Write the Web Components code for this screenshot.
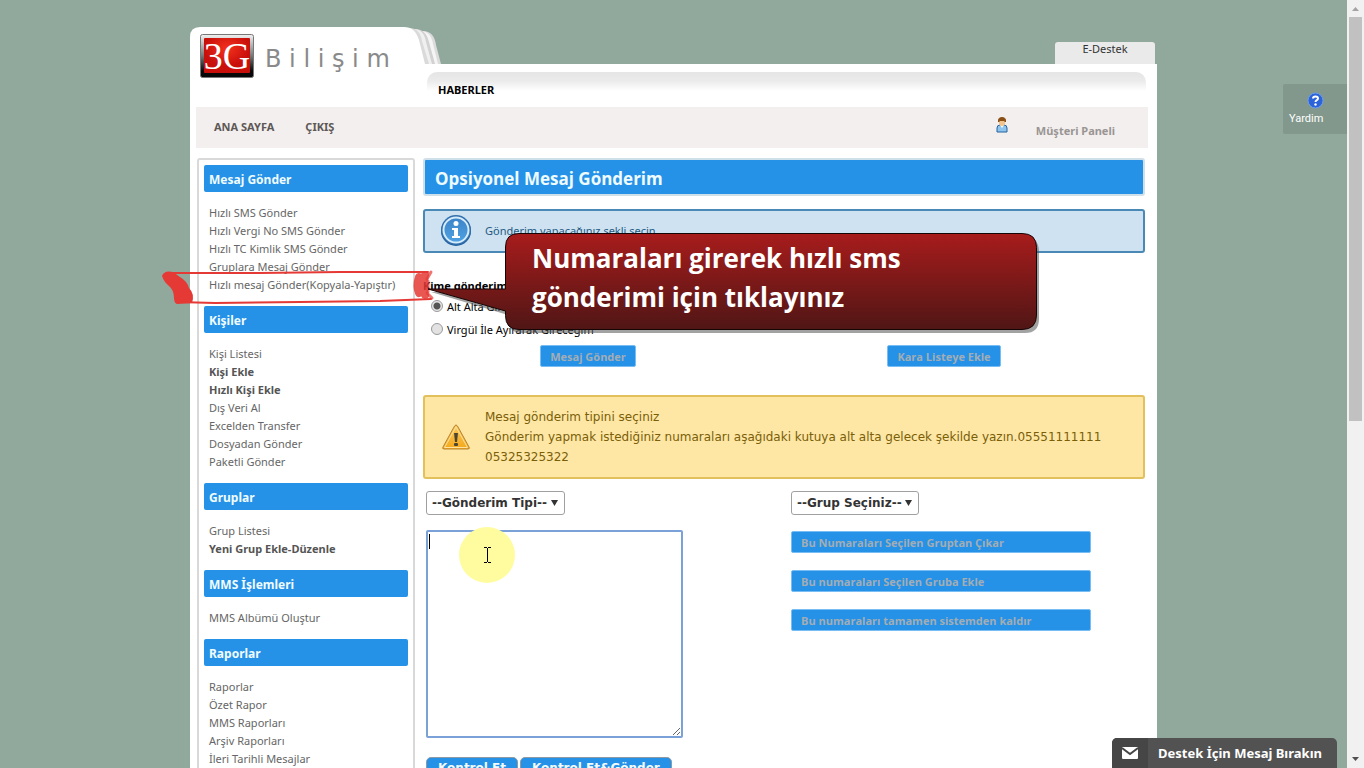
<!DOCTYPE html>
<html lang="tr">
<head>
<meta charset="utf-8">
<title>3G Bilişim</title>
<style>
  html, body {
    margin: 0;
    height: 100%;
    overflow: hidden;
    background: #91a89c;
    font: 12px/18px "Noto Sans", "Open Sans", sans-serif;
  }
</style>
</head>
<body>
<sms-app>
  <site-header slot="header"></site-header>
  <site-nav slot="nav"></site-nav>
  <side-menu slot="side">
    <menu-group heading="Mesaj Gönder">
      <a href="#">Hızlı SMS Gönder</a>
      <a href="#">Hızlı Vergi No SMS Gönder</a>
      <a href="#">Hızlı TC Kimlik SMS Gönder</a>
      <a href="#">Gruplara Mesaj Gönder</a>
      <a href="#">Hızlı mesaj Gönder(Kopyala-Yapıştır)</a>
    </menu-group>
    <menu-group heading="Kişiler">
      <a href="#">Kişi Listesi</a>
      <a href="#" class="strong">Kişi Ekle</a>
      <a href="#" class="strong">Hızlı Kişi Ekle</a>
      <a href="#">Dış Veri Al</a>
      <a href="#">Excelden Transfer</a>
      <a href="#">Dosyadan Gönder</a>
      <a href="#">Paketli Gönder</a>
    </menu-group>
    <menu-group heading="Gruplar">
      <a href="#">Grup Listesi</a>
      <a href="#" class="strong">Yeni Grup Ekle-Düzenle</a>
    </menu-group>
    <menu-group heading="MMS İşlemleri">
      <a href="#">MMS Albümü Oluştur</a>
    </menu-group>
    <menu-group heading="Raporlar">
      <a href="#">Raporlar</a>
      <a href="#">Özet Rapor</a>
      <a href="#">MMS Raporları</a>
      <a href="#">Arşiv Raporları</a>
      <a href="#">İleri Tarihli Mesajlar</a>
    </menu-group>
  </side-menu>
  <message-form slot="main"></message-form>
</sms-app>
<call-out></call-out>
<help-tab></help-tab>
<support-bar></support-bar>

<script>
class SmsApp extends HTMLElement {
  constructor() {
    super();
    this._root = this.attachShadow({ mode: 'open' });
  }

  connectedCallback() {
    this._root.innerHTML = `
      <style>
        :host {
          display: grid;
          grid-template-columns: 1fr 17px;
          height: 100vh;
        }

        .view {
          overflow: hidden;
        }

        .page {
          max-width: 967px;
          margin: 27px auto 0;
        }

        .sheet {
          background: #fff;
          padding: 0 9px 0 6px;
        }

        .columns {
          display: grid;
          grid-template-columns: 218px 1fr;
          gap: 8px;
          padding: 10px 3px 0 1px;
        }
      </style>
      <div class="view">
        <div class="page">
          <slot name="header"></slot>
          <div class="sheet">
            <slot name="nav"></slot>
            <div class="columns">
              <slot name="side"></slot>
              <slot name="main"></slot>
            </div>
          </div>
        </div>
      </div>
      <scroll-track></scroll-track>
    `;
  }
}

class ScrollTrack extends HTMLElement {
  constructor() {
    super();
    this._root = this.attachShadow({ mode: 'open' });
  }

  connectedCallback() {
    this._root.innerHTML = `
      <style>
        :host {
          display: grid;
          grid-template-rows: 17px 1fr 17px;
          justify-items: center;
          background: #f1f1f1;
        }

        .thumb {
          width: 13px;
          height: 55%;
          background: #c1c1c1;
        }

        svg {
          display: block;
        }
      </style>
      <svg width="17" height="17"><path d="M5 11h7l-3.500-4z" fill="#a3a3a3"/></svg>
      <div class="thumb"></div>
      <svg width="17" height="17"><path d="M5 6h7l-3.500 4z" fill="#505050"/></svg>
    `;
  }
}

class SiteHeader extends HTMLElement {
  constructor() {
    super();
    this._root = this.attachShadow({ mode: 'open' });
  }

  connectedCallback() {
    this._root.innerHTML = `
      <style>
        :host {
          display: grid;
          grid-template-columns: 237px 1fr;
          grid-template-rows: 37px 43px;
          background: linear-gradient(#fff, #fff) 0 37px no-repeat;
        }

        .brand {
          grid-row: 1 / 3;
          display: flex;
          align-items: flex-start;
          gap: 11px;
          padding: 7px 0 0 10px;
          color: #8a8a8a;
          font: 24px/50px "DejaVu Sans", sans-serif;
          white-space: pre;
          position: relative;
        }

        .brand svg {
          flex: none;
        }

        .brand .folder {
          position: absolute;
          left: 0;
          top: 0;
        }

        .brand .mark,
        .brand span {
          position: relative;
        }

        .tabs {
          display: flex;
          justify-content: flex-end;
          align-items: flex-end;
          padding-right: 2px;
        }

        .tabs a {
          width: 100px;
          height: 22px;
          line-height: 14px;
          border-radius: 3px 3px 0 0;
          background: #eaeaea;
          color: #333;
          font-size: 11px;
          text-align: center;
          text-decoration: none;
        }

        .news {
          margin: 8px 11px 0 0;
          padding: 9px 11px 0;
          border-radius: 10px 10px 0 0;
          background: linear-gradient(#e5e5e5, #ebebeb 9px, #fff 19px);
          color: #000;
          font-size: 11px;
          font-weight: bold;
        }
      </style>
      <div class="brand">
        <svg class="folder" width="254" height="37">
          <path d="M215 4h18q11 0 13 14l5 19h-30z" fill="#dcdcdc"/>
          <path d="M215 4h15q11 0 13 13l5 20h-30z" fill="#f5f5f5"/>
          <path d="M215 2h10q11 0 14 13l6 22h-30z" fill="#d2d2d2"/>
          <path d="M215 2h8q11 0 13 13l6 22h-30z" fill="#f0f0f0"/>
          <path d="M215 1h4q11 0 13 13l7 23h-30z" fill="#dadada"/>
          <path d="M0 37V10Q0 0 10 0h204q11 0 15 13l6 24z" fill="#fff"/>
        </svg>
        <svg class="mark" width="54" height="44" viewBox="0 0 54 44">
          <defs>
            <linearGradient id="frame" x2="0" y2="1">
              <stop offset="0" stop-color="#f2f2f2"/>
              <stop offset=".5" stop-color="#777"/>
              <stop offset=".85" stop-color="#080808"/>
            </linearGradient>
            <radialGradient id="red" cy=".3">
              <stop offset="0" stop-color="#f4301e"/>
              <stop offset="1" stop-color="#c80f0a"/>
            </radialGradient>
          </defs>
          <rect x=".5" y=".5" width="53" height="43" rx="2" fill="url(#frame)" stroke="#777"/>
          <rect x="4" y="4" width="46" height="35" rx="1" fill="url(#red)"/>
          <text x="27" y="35" text-anchor="middle" fill="#fff" font-family="Liberation Serif, serif" font-size="38">3G</text>
        </svg>
        <span>B i l i ş i m</span>
      </div>
      <div class="tabs"><a href="#">E-Destek</a></div>
      <div class="news">HABERLER</div>
    `;
  }
}

class SiteNav extends HTMLElement {
  constructor() {
    super();
    this._root = this.attachShadow({ mode: 'open' });
  }

  connectedCallback() {
    this._root.innerHTML = `
      <style>
        :host {
          display: block;
        }

        nav {
          display: flex;
          gap: 31px;
          height: 41px;
          padding: 0 33px 0 18px;
          background: #f3efee;
          font-size: 11px;
          font-weight: bold;
          line-height: 40px;
        }

        a {
          color: #5d5856;
          text-decoration: none;
        }

        .user {
          display: flex;
          gap: 28px;
          margin-left: auto;
          color: #999593;
          line-height: 48px;
        }

        svg {
          margin-top: 10px;
        }
      </style>
      <nav>
        <a href="#">ANA SAYFA</a>
        <a href="#">ÇIKIŞ</a>
        <span class="user">
          <svg width="12" height="16" viewBox="0 0 12 16">
            <path d="M1 15V11q0-3 3-3h4q3 0 3 3v4z" fill="#8fc4ee" stroke="#24659f"/>
            <path d="M4 8l2 3 2-3z" fill="#fff"/>
            <rect x="3" y="2" width="6" height="7" rx="3" fill="#f3c48b"/>
            <path d="M2.500 5V3q0-2.500 3.500-2.500T9.500 3v2L8 3.500H4z" fill="#8a4f16" stroke="#8a4f16"/>
          </svg>
          Müşteri Paneli
        </span>
      </nav>
    `;
  }
}

class SideMenu extends HTMLElement {
  constructor() {
    super();
    this._root = this.attachShadow({ mode: 'open' });
  }

  connectedCallback() {
    this._root.innerHTML = `
      <style>
        :host {
          display: flex;
          flex-direction: column;
          gap: 12px;
          border: 2px solid #d9d9d9;
          border-radius: 3px;
          padding: 5px 5px 12px 5px;
        }
      </style>
      <slot></slot>
    `;
  }
}

class MenuGroup extends HTMLElement {
  constructor() {
    super();
    this._root = this.attachShadow({ mode: 'open' });
  }

  connectedCallback() {
    this._root.innerHTML = `
      <style>
        :host {
          display: block;
        }

        h3 {
          margin: 0 0 12px;
          padding: 2px 0 0 5px;
          border-radius: 2px;
          background: #2591e7;
          color: #f0fcff;
          font-size: 12px;
          line-height: 25px;
        }

        ::slotted(a) {
          display: block;
          padding-left: 5px;
          color: #666;
          font-size: 11px;
          text-decoration: none;
          white-space: nowrap;
        }

        ::slotted(.strong) {
          color: #555;
          font-weight: bold;
        }
      </style>
      <h3>${this.getAttribute('heading')}</h3>
      <slot></slot>
    `;
  }
}

class NoticeBox extends HTMLElement {
  constructor() {
    super();
    this._root = this.attachShadow({ mode: 'open' });
  }

  connectedCallback() {
    this._root.innerHTML = `
      <style>
        :host {
          display: flex;
          align-items: center;
          gap: 14px;
          box-sizing: border-box;
          border: 2px solid #4a88b5;
          border-radius: 3px;
          padding: 4px 16px;
          background: #cfe2f2;
          color: #235a81;
          font-size: 11px;
        }

        :host([kind="warning"]) {
          border-color: #e2c05c;
          padding: 10px 16px;
          background: #fee6a5;
          color: #7a5f08;
          font: 12px/20px "DejaVu Sans", sans-serif;
        }

        svg {
          flex: none;
        }
      </style>
      ${this.getAttribute('kind') === 'warning' ? this._warning() : this._info()}
      <div><slot></slot></div>
    `;
  }

  _info() {
    return `
      <svg width="30" height="32" viewBox="0 0 30 32">
        <defs>
          <linearGradient id="ball" x2="0" y2="1">
            <stop offset="0" stop-color="#3c83c8"/>
            <stop offset="1" stop-color="#4fa2e2"/>
          </linearGradient>
        </defs>
        <circle cx="15" cy="16" r="15" fill="#1f5f9f"/>
        <circle cx="15" cy="15" r="15" fill="#3270ad"/>
        <circle cx="15" cy="15" r="12.500" fill="url(#ball)" stroke="#d6ecfb" stroke-width="2"/>
        <circle cx="15" cy="8.500" r="2.500" fill="#fff"/>
        <path d="M11 13h6v8h2v2h-8v-2h2v-6h-2z" fill="#fff"/>
      </svg>
    `;
  }

  _warning() {
    return `
      <svg width="30" height="28" viewBox="0 0 30 28">
        <defs>
          <linearGradient id="sign" x2="0" y2="1">
            <stop offset="0" stop-color="#fbc95a"/>
            <stop offset="1" stop-color="#f5a81c"/>
          </linearGradient>
        </defs>
        <path d="M15 2q1 0 2 2l11 20q1 2-1 2H3q-2 0-1-2L13 4q1-2 2-2z" fill="url(#sign)" stroke="#b88430"/>
        <path d="M15 4L3.500 24.500h23z" fill="none" stroke="#fde3a0"/>
        <path d="M13 10h4l-1 9h-2z" fill="#4b4632"/>
        <rect x="13" y="20" width="4" height="3" rx="1" fill="#4b4632"/>
      </svg>
    `;
  }
}

class MessageForm extends HTMLElement {
  constructor() {
    super();
    this._root = this.attachShadow({ mode: 'open' });
  }

  connectedCallback() {
    this._root.innerHTML = `
      <style>
        :host {
          display: block;
          color: #000;
        }

        h1 {
          margin: 0 0 13px;
          border: 2px solid #cfe0ea;
          border-radius: 3px;
          padding: 3px 10px 0;
          background: #2591e7;
          color: #eefbff;
          font: bold 17px/31px "Open Sans", "Noto Sans", sans-serif;
        }

        fieldset {
          margin: 24px 0 0;
          border: 0;
          padding: 0;
        }

        legend {
          padding: 0;
          font-size: 11px;
          font-weight: bold;
        }

        .choice {
          display: flex;
          align-items: center;
          gap: 4px;
          height: 23px;
          padding-left: 8px;
          font-size: 11px;
        }

        .choice input {
          appearance: none;
          flex: none;
          box-sizing: border-box;
          width: 12px;
          height: 12px;
          margin: 0 0 2px;
          border: 1px solid #999;
          border-radius: 50%;
          background: #e2e2e2;
        }

        .choice input:checked {
          background: radial-gradient(circle, #555 0 3px, #e6e6e6 4px);
        }

        button {
          box-sizing: border-box;
          height: 22px;
          border: 1px solid #78bdf3;
          border-radius: 2px;
          padding: 0 9px;
          background: #2591e7;
          color: #a3adb4;
          font: bold 11px "Open Sans", "Noto Sans", sans-serif;
        }

        .actions {
          display: grid;
          grid-template-columns: 330fr 382fr;
          justify-items: center;
          padding: 4px 10px 0 0;
          margin-bottom: 28px;
        }

        .fields {
          display: grid;
          grid-template-columns: 365fr 354fr;
          padding: 12px 0 0 3px;
        }

        select {
          appearance: none;
          display: block;
          box-sizing: border-box;
          height: 24px;
          margin-bottom: 15px;
          border: 1px solid #a0a0a0;
          border-radius: 3px;
          padding: 0 16px 0 5px;
          background: #fff url('data:image/svg+xml,<svg xmlns="http://www.w3.org/2000/svg" width="14" height="8"><path d="M1 1h7l-3.500 6z" fill="%23333"/></svg>') right center no-repeat;
          color: #333;
          font: bold 12px "DejaVu Sans", sans-serif;
        }

        .box {
          position: relative;
          width: 257px;
        }

        textarea {
          display: block;
          box-sizing: border-box;
          width: 100%;
          height: 208px;
          border: 2px solid #7ba2d8;
          border-radius: 2px;
          outline: 0;
          background: #fff;
          font: 12px "DejaVu Sans", sans-serif;
        }

        .caret {
          position: absolute;
          left: 3px;
          top: 4px;
          width: 1px;
          height: 15px;
          background: #000;
        }

        .pointer {
          position: absolute;
          left: 33px;
          top: -3px;
        }

        .stack {
          display: grid;
          gap: 17px;
          width: 300px;
          padding-top: 1px;
        }

        .stack button {
          text-align: left;
        }

        .send {
          display: flex;
          gap: 2px;
          padding-top: 19px;
        }

        .send button {
          border-color: #8d9aa5;
          border-radius: 5px;
          padding: 0 11px;
          color: #f2fcff;
          font: bold 12px "DejaVu Sans", sans-serif;
        }
      </style>
      <h1>Opsiyonel Mesaj Gönderim</h1>
      <notice-box kind="info">Gönderim yapacağınız şekli seçin</notice-box>
      <fieldset>
        <legend>Kime gönderim</legend>
        <label class="choice"><input type="radio" name="mode" checked>Alt Alta Gireceğim</label>
        <label class="choice"><input type="radio" name="mode">Virgül İle Ayırarak Gireceğim</label>
      </fieldset>
      <div class="actions">
        <button type="button">Mesaj Gönder</button>
        <button type="button">Kara Listeye Ekle</button>
      </div>
      <notice-box kind="warning">Mesaj gönderim tipini seçiniz<br>Gönderim yapmak istediğiniz numaraları aşağıdaki kutuya alt alta gelecek şekilde yazın.05551111111<br>05325325322</notice-box>
      <div class="fields">
        <div>
          <select aria-label="Gönderim Tipi"><option>--Gönderim Tipi--</option></select>
          <div class="box">
            <textarea aria-label="Numaralar"></textarea>
            <span class="caret"></span>
            <svg class="pointer" width="56" height="56" viewBox="0 0 56 56">
              <circle cx="28" cy="28" r="28" fill="#fffca0"/>
              <path d="M25 20.500h3m1 0h3M25 35.500h3m1 0h3M28.500 21v14" fill="none" stroke="#000"/>
            </svg>
          </div>
          <div class="send">
            <button type="button">Kontrol Et</button>
            <button type="button">Kontrol Et&amp;Gönder</button>
          </div>
        </div>
        <div>
          <select aria-label="Grup"><option>--Grup Seçiniz--</option></select>
          <div class="stack">
            <button type="button">Bu Numaraları Seçilen Gruptan Çıkar</button>
            <button type="button">Bu numaraları Seçilen Gruba Ekle</button>
            <button type="button">Bu numaraları tamamen sistemden kaldır</button>
          </div>
        </div>
      </div>
    `;
  }
}

// Balloon and red marker strokes that float over the page
class CallOut extends HTMLElement {
  constructor() {
    super();
    this._root = this.attachShadow({ mode: 'open' });
  }

  connectedCallback() {
    this._root.innerHTML = `
      <style>
        :host {
          position: absolute;
          left: calc(50% - 522px);
          top: 228px;
          pointer-events: none;
        }

        svg {
          display: block;
        }

        p {
          position: absolute;
          left: 372px;
          top: 11px;
          margin: 0;
          color: #fff;
          font: bold 26px/39px "Open Sans", "Noto Sans", sans-serif;
          white-space: nowrap;
        }
      </style>
      <svg width="890" height="112" viewBox="160 228 890 112">
        <defs>
          <linearGradient id="balloon" gradientUnits="userSpaceOnUse" x1="0" y1="233" x2="0" y2="330">
            <stop offset="0" stop-color="#a81c1c"/>
            <stop offset="1" stop-color="#4f1615"/>
          </linearGradient>
        </defs>
        <path d="M162 276q2-6 11-4l7 5q7 4 9 11 6 6 3 15l-15 1q-3-1-3-6 0-8-5-12-5-4-7-10z" fill="#e53935"/>
        <g fill="none" stroke="#e53935" stroke-linecap="round" stroke-linejoin="round">
          <path d="M168 273L260 273 340 272 428 272M178 302L215 303 300 302 380 301 431 299" stroke-width="2"/>
          <path d="M419 277q-3 9 0 16M425 275q-3 11 0 20" stroke-width="8" opacity=".85"/>
          <path d="M431 272l-4 7M432 298l-5-5M428 281v11" stroke-width="3" opacity=".7"/>
        </g>
        <path d="M519 233.500H1022q14 0 14 14V315q0 14-14 14H519q-14 0-14-14V311L428 288 505 289V247q0-14 14-14z" transform="translate(3 4)" fill="#555" opacity=".55"/>
        <path d="M519 233.500H1022q14.500 0 14.500 14V315q0 14.500-14.500 14.500H519q-13.500 0-13.500-14V311L428 289 505.500 289V247q0-13.500 13.500-13.500z" fill="url(#balloon)" stroke="#160505"/>
      </svg>
      <p>Numaraları girerek hızlı sms<br>gönderimi için tıklayınız</p>
    `;
  }
}

class HelpTab extends HTMLElement {
  constructor() {
    super();
    this._root = this.attachShadow({ mode: 'open' });
  }

  connectedCallback() {
    this._root.innerHTML = `
      <style>
        :host {
          position: fixed;
          right: 17px;
          top: 84px;
        }

        a {
          display: grid;
          box-sizing: border-box;
          width: 64px;
          height: 50px;
          padding: 8px 6px 0;
          border-radius: 2px 0 0 2px;
          background: #82988c;
          color: #fff;
          font: 11px/20px Roboto, sans-serif;
          text-decoration: none;
          align-content: start;
        }

        svg {
          margin-left: 18px;
        }
      </style>
      <a href="#">
        <svg width="17" height="17" viewBox="0 0 17 17">
          <circle cx="8.500" cy="8.500" r="7.500" fill="#2d63d8" stroke="#6f9df0"/>
          <path d="M6 6.500Q6 4.500 8.500 4.500T11 6.500Q11 7.500 9.500 8.300 8.500 9 8.500 10" fill="none" stroke="#fff" stroke-width="2"/>
          <circle cx="8.500" cy="12.500" r="1.200" fill="#fff"/>
        </svg>
        Yardim
      </a>
    `;
  }
}

class SupportBar extends HTMLElement {
  constructor() {
    super();
    this._root = this.attachShadow({ mode: 'open' });
  }

  connectedCallback() {
    this._root.innerHTML = `
      <style>
        :host {
          position: fixed;
          right: 27px;
          bottom: 0;
        }

        button {
          display: flex;
          align-items: center;
          width: 225px;
          height: 30px;
          border: 0;
          border-radius: 5px 5px 0 0;
          padding: 0;
          overflow: hidden;
          background: #525252;
          color: #fff;
          font: bold 13px "Noto Sans", sans-serif;
          white-space: nowrap;
        }

        .icon {
          display: grid;
          place-items: center;
          width: 36px;
          height: 30px;
          margin-right: 10px;
          background: #464646;
        }
      </style>
      <button type="button">
        <span class="icon">
          <svg width="16" height="12" viewBox="0 0 16 12">
            <rect width="16" height="12" rx="1" fill="#fff"/>
            <path d="M0 1l8 6 8-6" fill="none" stroke="#464646" stroke-width="2"/>
          </svg>
        </span>
        Destek İçin Mesaj Bırakın
      </button>
    `;
  }
}

window.customElements.define('sms-app', SmsApp);
window.customElements.define('scroll-track', ScrollTrack);
window.customElements.define('site-header', SiteHeader);
window.customElements.define('site-nav', SiteNav);
window.customElements.define('side-menu', SideMenu);
window.customElements.define('menu-group', MenuGroup);
window.customElements.define('notice-box', NoticeBox);
window.customElements.define('message-form', MessageForm);
window.customElements.define('call-out', CallOut);
window.customElements.define('help-tab', HelpTab);
window.customElements.define('support-bar', SupportBar);
</script>
</body>
</html>
